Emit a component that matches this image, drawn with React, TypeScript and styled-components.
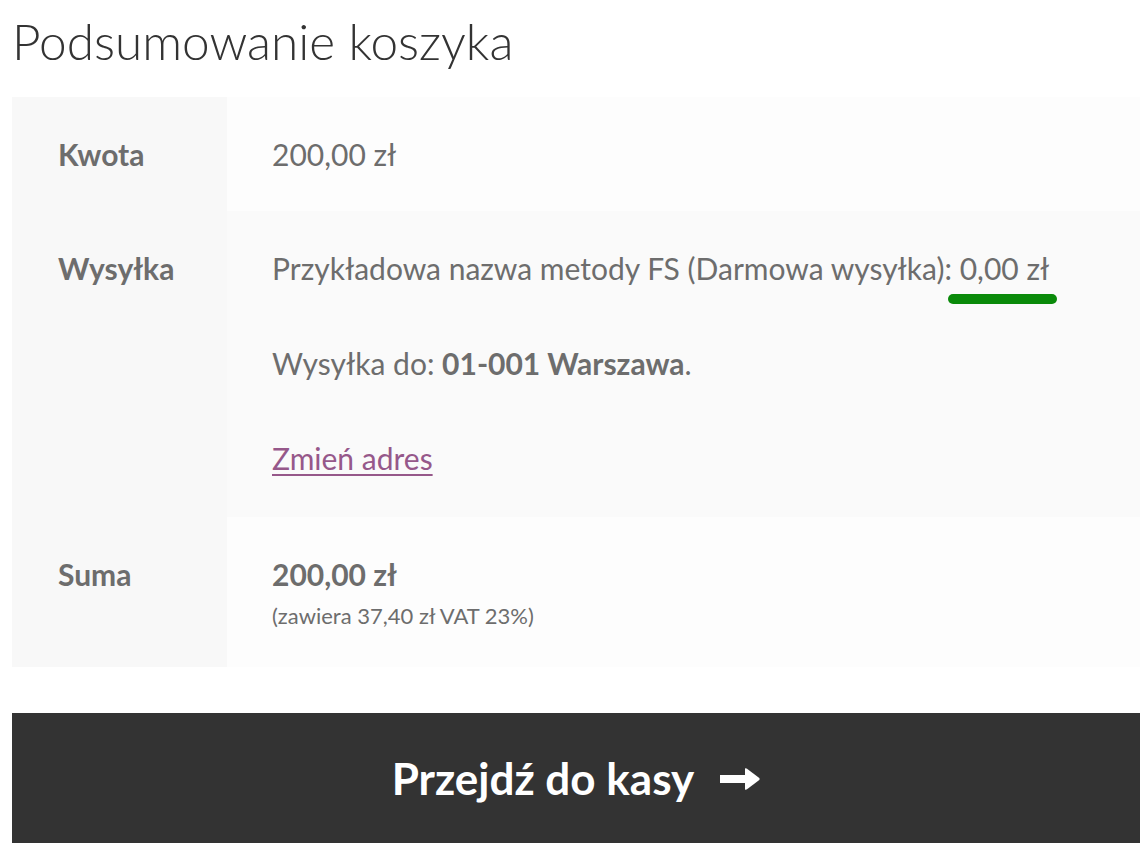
import React from "react";
import styled, { createGlobalStyle } from "styled-components";

const GlobalStyle = createGlobalStyle`
  body {
    margin: 0;
    background: #ffffff;
    font-family: Lato, "Open Sans", sans-serif;
    color: #6d6d6d;
  }
`;

const Wrapper = styled.div`
  padding: 0 8px 0 12px;
`;

const Title = styled.h2`
  margin: 0;
  padding-top: 10px;
  height: 87px;
  font-size: 49.5px;
  font-weight: 300;
  line-height: 62px;
  color: #333333;
`;

const Table = styled.table`
  width: 100%;
  border-collapse: collapse;
  border-spacing: 0;
`;

const Row = styled.tr<{ $even?: boolean }>`
  th {
    background: #f8f8f8;
  }
  td {
    background: ${(p) => (p.$even ? "#fafafa" : "#fdfdfd")};
  }
`;

const Label = styled.th`
  width: 169px;
  padding: 38px 0 0 46px;
  text-align: left;
  vertical-align: top;
  font-size: 30px;
  font-weight: 700;
  line-height: 38px;
`;

const Value = styled.td<{ $pad?: string }>`
  padding: ${(p) => p.$pad ?? "38px 45px"};
  vertical-align: top;
  font-size: 30px;
  line-height: 38px;
`;

const Para = styled.p`
  margin: 0 0 57px;

  &:last-child {
    margin-bottom: 0;
  }
`;

const Marked = styled.span`
  position: relative;

  &::after {
    content: "";
    position: absolute;
    left: -12px;
    right: -8px;
    bottom: -18px;
    height: 10px;
    border-radius: 5px;
    background: #0a8a0a;
  }
`;

const ChangeLink = styled.a`
  color: #96588a;
  text-decoration: underline;
  text-underline-offset: 4px;
  text-decoration-thickness: 2px;
`;

const Total = styled.strong`
  display: block;
  font-weight: 700;
`;

const Tax = styled.small`
  display: block;
  margin-top: 7px;
  font-size: 22px;
  line-height: 32px;
`;

const CheckoutButton = styled.a`
  display: flex;
  align-items: center;
  justify-content: center;
  gap: 26px;
  margin-top: 46px;
  height: 130px;
  background: #333333;
  color: #ffffff;
  font-size: 44px;
  font-weight: 700;
  text-decoration: none;
`;

const ArrowIcon = styled.svg`
  width: 40px;
  height: 22px;
  margin-top: 2px;
  fill: #ffffff;
`;

export default function App() {
  return (
    <>
      <GlobalStyle />
      <Wrapper>
        <Title>Podsumowanie koszyka</Title>
        <Table>
          <tbody>
            <Row>
              <Label>Kwota</Label>
              <Value $pad="38px 45px 38px">200,00 zł</Value>
            </Row>
            <Row $even>
              <Label>Wysyłka</Label>
              <Value $pad="38px 45px 40px">
                <Para>
                  Przykładowa nazwa metody FS (Darmowa wysyłka):{" "}
                  <Marked>0,00 zł</Marked>
                </Para>
                <Para>
                  Wysyłka do: <strong>01-001 Warszawa</strong>.
                </Para>
                <Para>
                  <ChangeLink href="#">Zmień adres</ChangeLink>
                </Para>
              </Value>
            </Row>
            <Row>
              <Label>Suma</Label>
              <Value $pad="38px 45px 35px">
                <Total>200,00 zł</Total>
                <Tax>(zawiera 37,40 zł VAT 23%)</Tax>
              </Value>
            </Row>
          </tbody>
        </Table>
        <CheckoutButton href="#">
          Przejdź do kasy
          <ArrowIcon viewBox="0 0 40 22" aria-hidden="true">
            <rect x="0" y="7" width="27" height="8" />
            <path d="M25 0.5 Q26 0 27 0.7 L39.3 10 Q40 11 39.3 12 L27 21.3 Q26 22 25 21.5 Z" />
          </ArrowIcon>
        </CheckoutButton>
      </Wrapper>
    </>
  );
}
